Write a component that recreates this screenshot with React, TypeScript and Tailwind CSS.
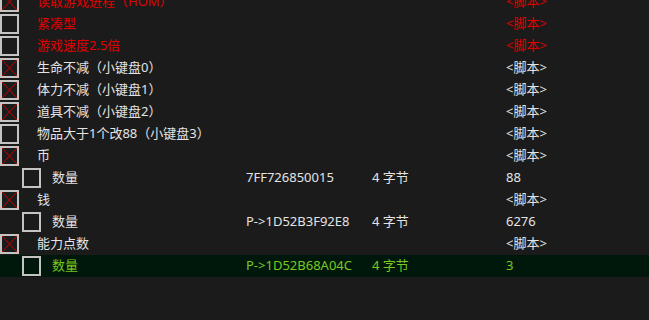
import React from 'react';

interface Entry {
  desc: string;
  checked?: boolean;
  child?: boolean;
  red?: boolean;
  selected?: boolean;
  address?: string;
  type?: string;
  value: string;
}

const ENTRIES: Entry[] = [
  { desc: '读取游戏进程（HOM）', checked: true, red: true, value: '<脚本>' },
  { desc: '紧凑型', red: true, value: '<脚本>' },
  { desc: '游戏速度2.5倍', red: true, value: '<脚本>' },
  { desc: '生命不减（小键盘0）', checked: true, value: '<脚本>' },
  { desc: '体力不减（小键盘1）', checked: true, value: '<脚本>' },
  { desc: '道具不减（小键盘2）', checked: true, value: '<脚本>' },
  { desc: '物品大于1个改88（小键盘3）', value: '<脚本>' },
  { desc: '币', checked: true, value: '<脚本>' },
  { desc: '数量', child: true, address: '7FF726850015', type: '4 字节', value: '88' },
  { desc: '钱', checked: true, value: '<脚本>' },
  { desc: '数量', child: true, address: 'P->1D52B3F92E8', type: '4 字节', value: '6276' },
  { desc: '能力点数', checked: true, value: '<脚本>' },
  { desc: '数量', child: true, selected: true, address: 'P->1D52B68A04C', type: '4 字节', value: '3' },
];

const CheckBox: React.FC<{ checked?: boolean }> = ({ checked }) => (
  <div className="relative w-[19px] h-[20px] border-2 border-[#c4c4c4] shrink-0">
    {checked && (
      <svg className="absolute inset-0" width="15" height="16" viewBox="0 0 15 16">
        <line x1="0" y1="0" x2="15" y2="16" stroke="#cc0000" strokeWidth="1" />
        <line x1="15" y1="0" x2="0" y2="16" stroke="#cc0000" strokeWidth="1" />
      </svg>
    )}
  </div>
);

const Row: React.FC<{ entry: Entry }> = ({ entry }) => {
  const color = entry.selected ? 'text-[#78c81e]' : entry.red ? 'text-[#e00000]' : 'text-[#e4e4e4]';
  return (
    <div className={`flex items-center h-[22px] ${entry.selected ? 'bg-[#00180c]' : ''} ${color}`}>
      <div className="w-[246px] flex items-center shrink-0">
        {entry.child ? (
          <>
            <div className="w-[22px] shrink-0" />
            <CheckBox checked={entry.checked} />
            <span className="ml-[11px] whitespace-nowrap -translate-y-px">{entry.desc}</span>
          </>
        ) : (
          <>
            <CheckBox checked={entry.checked} />
            <span className="ml-[18px] whitespace-nowrap -translate-y-px">{entry.desc}</span>
          </>
        )}
      </div>
      <div className="w-[126px] shrink-0 whitespace-nowrap -translate-y-px">{entry.address}</div>
      <div className="w-[134px] shrink-0 whitespace-nowrap -translate-y-px">{entry.type}</div>
      <div className="flex-1 whitespace-nowrap -translate-y-px">{entry.value}</div>
    </div>
  );
};

const App: React.FC = () => {
  return (
    <div
      className="w-[649px] h-[320px] overflow-hidden bg-[#1b1b1b] text-[13px] leading-none"
      style={{ fontFamily: '"Noto Sans", "Noto Sans CJK SC", sans-serif' }}
    >
      <div className="-mt-[9px]">
        {ENTRIES.map((e, i) => (
          <Row key={i} entry={e} />
        ))}
      </div>
    </div>
  );
};

export default App;
